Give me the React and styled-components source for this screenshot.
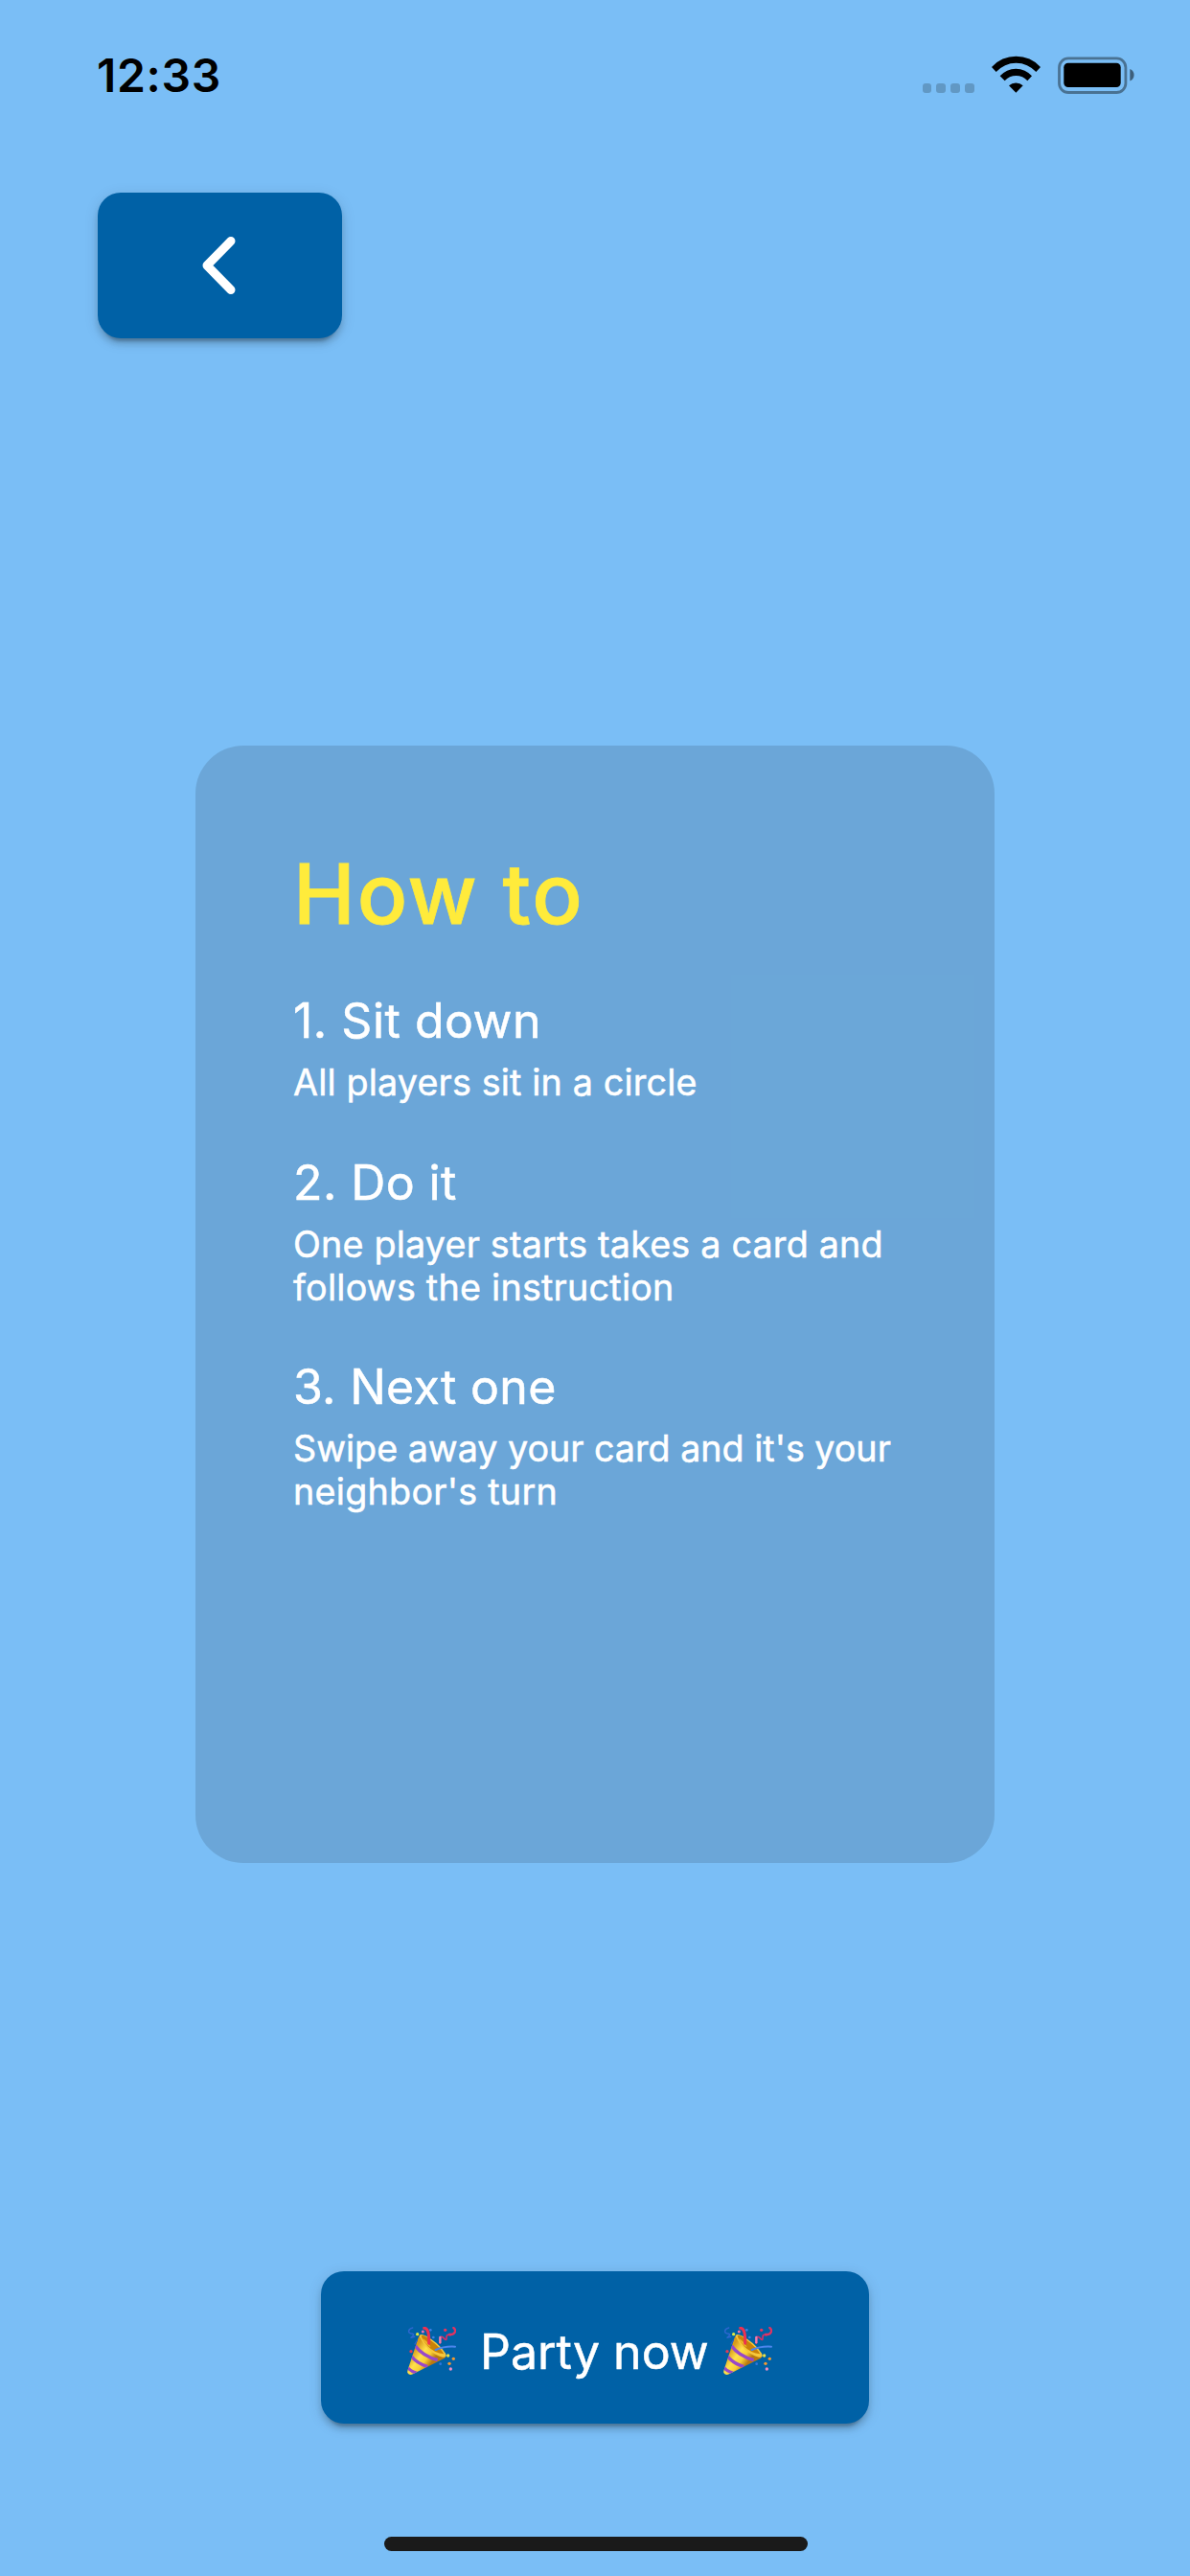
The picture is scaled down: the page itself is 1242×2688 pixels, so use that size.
import React from "react";
import styled, { createGlobalStyle } from "styled-components";

const colors = {
  sky: "#7abef6",
  button: "#0061a6",
  title: "#ffeb3b",
};

const GlobalStyle = createGlobalStyle`
  body {
    margin: 0;
    background: ${colors.sky};
  }
`;

const Screen = styled.main`
  box-sizing: border-box;
  width: 1242px;
  height: 2688px;
  display: flex;
  flex-direction: column;
  overflow: hidden;
  background: ${colors.sky};
  font-family: Inter, "Liberation Sans", sans-serif;
`;

const StatusBar = styled.header`
  box-sizing: border-box;
  height: 201px;
  padding: 50px 57px 0 101px;
  display: flex;
  justify-content: space-between;
  align-items: flex-start;
`;

const Clock = styled.time`
  font-size: 48px;
  line-height: 58px;
  font-weight: 600;
  letter-spacing: 0.7px;
  color: #000;
`;

const StatusIcons = styled.div`
  display: flex;
  height: 40px;
  margin-top: 8px;
`;

const SignalDots = styled.div`
  display: flex;
  align-items: flex-end;
  gap: 5.1px;
  margin: 0 17px 1.2px 0;
`;

const SignalDot = styled.span`
  width: 9.8px;
  height: 10px;
  border-radius: 3px;
  background: rgba(0, 0, 0, 0.2);
`;

const Wifi = styled.svg`
  width: 53px;
  height: 40px;
  margin-right: 16px;
`;

const Battery = styled.svg`
  width: 82px;
  height: 40px;
`;

const RaisedButton = styled.button`
  box-sizing: border-box;
  margin: 0;
  border: 0;
  border-radius: 24px;
  display: flex;
  align-items: center;
  background: ${colors.button};
  color: #fff;
  font-family: inherit;
  box-shadow:
    0 9px 3px -6px rgba(0, 0, 0, 0.2),
    0 6px 6px 0 rgba(0, 0, 0, 0.14),
    0 3px 15px 0 rgba(0, 0, 0, 0.12);
`;

const BackButton = styled(RaisedButton)`
  width: 254.5px;
  height: 152px;
  margin-left: 102px;
  padding: 0 0 0 107px;
`;

const Chevron = styled.svg`
  width: 38px;
  height: 64px;
`;

const Card = styled.section`
  box-sizing: border-box;
  width: 834px;
  height: 1166.5px;
  margin: 424.5px 0 0 204px;
  padding: 102.5px 80px 0 102px;
  border-radius: 50px;
  background: rgba(0, 0, 0, 0.12);
  color: #fff;
`;

const CardTitle = styled.h1`
  margin: 0 0 49px;
  font-size: 87px;
  line-height: 106px;
  font-weight: 500;
  letter-spacing: 1.85px;
  color: ${colors.title};
  -webkit-text-stroke: 0.8px currentColor;
`;

const Steps = styled.div`
  display: flex;
  flex-direction: column;
  gap: 51.8px;
  -webkit-text-stroke: 0.5px currentColor;
`;

const StepTitle = styled.h2`
  margin: 0 0 12.3px;
  font-size: 50px;
  line-height: 60px;
  font-weight: 400;
  letter-spacing: ${(p) => p.$tracking}px;
`;

const StepLine = styled.div`
  font-size: 37.7px;
  line-height: 44.6px;
  white-space: nowrap;
  letter-spacing: ${(p) => p.$tracking}px;
`;

const PartyButton = styled(RaisedButton)`
  width: 572px;
  height: 159px;
  margin: 425.5px 0 0 335px;
  padding: 9px 0 0 90px;
`;

const PartyLabel = styled.span`
  margin: 0 15.4px 0 25px;
  font-size: 50px;
  line-height: 60px;
  -webkit-text-stroke: 0.5px currentColor;
`;

const Popper = styled.svg`
  width: 51px;
  height: 51px;
  flex: none;
`;

const HomeIndicator = styled.div`
  width: 442px;
  height: 15px;
  margin: 118px 0 0 400.5px;
  border-radius: 8px;
  background: #1a1a1a;
`;

const steps = [
  {
    title: "1. Sit down",
    tracking: 0.5,
    lines: [{ text: "All players sit in a circle", tracking: 0.16 }],
  },
  {
    title: "2. Do it",
    tracking: 0.4,
    lines: [
      { text: "One player starts takes a card and", tracking: 0.2 },
      { text: "follows the instruction", tracking: 0.24 },
    ],
  },
  {
    title: "3. Next one",
    tracking: 0.3,
    lines: [
      { text: "Swipe away your card and it's your", tracking: -0.02 },
      { text: "neighbor's turn", tracking: 0.26 },
    ],
  },
];

function WifiIcon() {
  return (
    <Wifi viewBox="282 54 159 120" aria-label="Wi-Fi">
      <path d="M285 90 A103 103 0 0 1 438 90 L424 105 A84 84 0 0 0 299 105 Z" />
      <path d="M311 118 A66 66 0 0 1 411 118 L397 133 A47 47 0 0 0 326 133 Z" />
      <path d="M339 148 A32 32 0 0 1 383 148 L361 170 Z" />
    </Wifi>
  );
}

function BatteryIcon() {
  return (
    <Battery viewBox="0 0 82 40" aria-label="Battery full">
      <rect
        x="2.5"
        y="2.9"
        width="69.4"
        height="35.6"
        rx="9.5"
        fill="none"
        stroke="#000"
        strokeOpacity="0.4"
        strokeWidth="2.8"
      />
      <rect x="7.3" y="7.8" width="59.4" height="25.2" rx="4.5" />
      <path d="M76.3 14 C82 16 82 24.5 76.3 26.5 Z" fillOpacity="0.5" />
    </Battery>
  );
}

function PartyPopper() {
  return (
    <Popper viewBox="30 56 153 153" role="img" aria-label="🎉">
      <defs>
        <linearGradient id="cone" x1="50" y1="130" x2="105" y2="170" gradientUnits="userSpaceOnUse">
          <stop offset="0" stopColor="#d79a1c" />
          <stop offset="0.4" stopColor="#ffe04b" />
          <stop offset="0.7" stopColor="#f8cf35" />
          <stop offset="1" stopColor="#b9780f" />
        </linearGradient>
        <clipPath id="coneShape">
          <path d="M70 82 C88 118 120 145 151 149 Q148 156 138 159 L48 204 Q37 209 31 200 Q30 195 32 190 L65 90 Z" />
        </clipPath>
      </defs>
      <g clipPath="url(#coneShape)">
        <rect x="28" y="78" width="126" height="130" fill="url(#cone)" />
        <g fill="none" stroke="#9848c9" strokeWidth="10">
          <path d="M55 115 Q77 146 125 160" />
          <path d="M42 147 Q59 170 94 181" />
          <path d="M29 181 Q40 195 61 201" />
        </g>
      </g>
      <path d="M68 85 Q68 75 87 84 Q129 106 150 139 Q157 152 141 151 Q94 138 68 85 Z" fill="#f7c83b" />
      <path d="M74 84 Q83 80 102 97 Q131 117 145 141 Q116 139 94 116 Q77 98 74 84 Z" fill="#c98209" />
      <path d="M76 92 Q92 97 104 120 Q91 116 76 92 Z" fill="#eeb42a" />
      <g fill="none" strokeLinecap="round" strokeLinejoin="round">
        <path d="M83 60 C94 60 99 73 98 108" stroke="#ed3152" strokeWidth="9" />
        <path d="M119 128 Q146 116 180 118" stroke="#4b85ed" strokeWidth="6" />
        <path d="M133 107 L134 89 Q138 84 147 94 Q154 101 153 89 Q153 78 165 82" stroke="#d92e66" strokeWidth="5" />
        <path d="M133 105 V89" stroke="#f17fb0" strokeWidth="7" />
        <path d="M162 80 Q178 81 180 70 Q181 63 175 59" stroke="#e23361" strokeWidth="7" />
        <path d="M47 59 C33 63 30 75 43 77 C56 78 47 85 42 90 L53 87" stroke="#2d67cf" strokeWidth="4.5" />
        <path d="M61 98 L54 110" stroke="#285fc9" strokeWidth="4" />
      </g>
      <circle cx="62" cy="79" r="5" fill="#dcea42" />
      <circle cx="79" cy="71" r="4.5" fill="#ed76b2" />
      <circle cx="103" cy="66" r="4" fill="#3d82e8" />
      <circle cx="112" cy="89" r="4" fill="#3d82e8" />
      <circle cx="149" cy="66" r="5" fill="#e9375c" />
      <circle cx="42" cy="133" r="5" fill="#e23a55" />
      <circle cx="158" cy="146" r="5" fill="#e8e246" />
      <circle cx="175" cy="156" r="5" fill="#f39a2f" />
      <circle cx="162" cy="171" r="5" fill="#f39a2f" />
      <circle cx="134" cy="172" r="4" fill="#2f76df" />
      <circle cx="166" cy="188" r="5" fill="#ed8cc4" />
    </Popper>
  );
}

export default function App() {
  return (
    <>
      <GlobalStyle />
      <Screen>
        <StatusBar>
          <Clock>12:33</Clock>
          <StatusIcons>
            <SignalDots>
              <SignalDot />
              <SignalDot />
              <SignalDot />
              <SignalDot />
            </SignalDots>
            <WifiIcon />
            <BatteryIcon />
          </StatusIcons>
        </StatusBar>

        <BackButton aria-label="Back">
          <Chevron viewBox="209 245 38 64">
            <path
              d="M241 251.5 L216 277 L241 302.5"
              fill="none"
              stroke="#fff"
              strokeWidth="9"
              strokeLinecap="round"
              strokeLinejoin="round"
            />
          </Chevron>
        </BackButton>

        <Card>
          <CardTitle>How to</CardTitle>
          <Steps>
            {steps.map((step) => (
              <div key={step.title}>
                <StepTitle $tracking={step.tracking}>{step.title}</StepTitle>
                {step.lines.map((line) => (
                  <StepLine key={line.text} $tracking={line.tracking}>
                    {line.text}
                  </StepLine>
                ))}
              </div>
            ))}
          </Steps>
        </Card>

        <PartyButton>
          <PartyPopper />
          <PartyLabel>Party now</PartyLabel>
          <PartyPopper />
        </PartyButton>

        <HomeIndicator />
      </Screen>
    </>
  );
}
